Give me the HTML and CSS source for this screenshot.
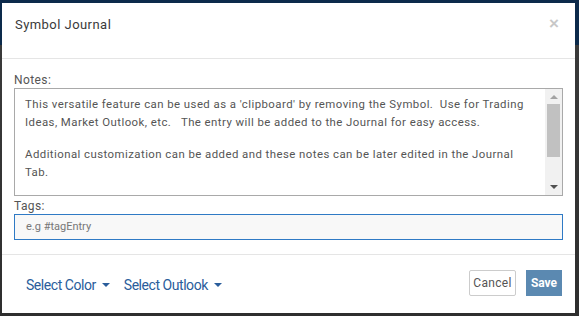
FILE: index.html
```html
<!DOCTYPE html>
<html>
<head>
<meta charset="utf-8">
<link rel="stylesheet" href="styles.css">
</head>
<body>
<div class="backdrop">
  <div class="modal">
    <div class="modal-header">
      <h4 class="title">Symbol Journal</h4>
      <span class="close">×</span>
    </div>
    <div class="modal-body">
      <label class="label">Notes:</label>
      <div class="notes">
        <div class="notes-text">
          <p>This versatile feature can be used as a 'clipboard' by removing the Symbol.&nbsp; Use for Trading Ideas, Market Outlook, etc. &nbsp; The entry will be added to the Journal for easy access.</p>
          <p>Additional customization can be added and these notes can be later edited in the Journal Tab.</p>
        </div>
        <div class="scrollbar">
          <div class="arrow up"></div>
          <div class="thumb"></div>
          <div class="spacer"></div>
          <div class="arrow down"></div>
        </div>
      </div>
      <label class="label tags-label">Tags:</label>
      <div class="tags">e.g #tagEntry</div>
    </div>
    <div class="modal-footer">
      <div class="selects">
        <span class="select">Select Color <span class="caret"></span></span>
        <span class="select">Select Outlook <span class="caret"></span></span>
      </div>
      <div class="buttons">
        <button class="btn cancel">Cancel</button>
        <button class="btn save">Save</button>
      </div>
    </div>
  </div>
</div>
</body>
</html>
```
FILE: styles.css
```css
* { box-sizing: border-box; }
html, body { margin: 0; padding: 0; }
body {
  width: 579px;
  height: 316px;
  overflow: hidden;
  font-family: Roboto, "Noto Sans", sans-serif;
  background: linear-gradient(to bottom, #0c2a4b 0, #0c2a4b 45px, #3a3a3a 45px, #2e2e2e 100%);
}
.backdrop {
  padding: 3px 4px 0 2px;
}
.modal {
  background: #fff;
  width: 573px;
  height: 310px;
  display: flex;
  flex-direction: column;
}
.modal-header {
  height: 56px;
  border-bottom: 1px solid #e5e5e5;
  display: flex;
  align-items: flex-start;
  justify-content: space-between;
  padding: 14px 16px 0 13px;
}
.title {
  margin: 0;
  font-weight: 400;
  font-size: 13px;
  color: #3a3a3a;
  letter-spacing: 0.45px;
  line-height: 16px;
}
.close {
  font-size: 17px;
  color: #c8c8c8;
  font-family: "Liberation Sans", Arial, sans-serif;
  font-weight: bold;
  line-height: 16px;
  margin-top: -1px;
}
.modal-body {
  padding: 14px 12px 0 12px;
  display: flex;
  flex-direction: column;
  height: 196px;
  border-bottom: 1px solid #e5e5e5;
}
.label {
  font-size: 12px;
  color: #555;
  letter-spacing: 0.4px;
  line-height: 14px;
  margin-bottom: 1px;
}
.notes {
  height: 108px;
  border: 1px solid #a9a9a9;
  display: flex;
}
.notes-text {
  flex: 1;
  padding: 6px 10px 0 10px;
  font-size: 11.4px;
  color: #555;
  letter-spacing: 0.45px;
  line-height: 18px;
}
.notes-text p { margin: 0 0 14px 0; }
.scrollbar {
  width: 17px;
  background: #f1f1f1;
  display: flex;
  flex-direction: column;
  align-items: center;
}
.arrow {
  width: 0; height: 0;
  border-left: 4px solid transparent;
  border-right: 4px solid transparent;
}
.arrow.up { border-bottom: 4px solid #a3a3a3; margin: 6px 0 5px; }
.arrow.down { border-top: 4px solid #505050; margin: 0 0 6px; }
.thumb {
  width: 13px;
  height: 53px;
  background: #c1c1c1;
}
.spacer { flex: 1; }
.tags-label { margin-top: 3px; }
.tags {
  height: 26px;
  border: 1px solid #2f7ac5;
  background: #f8f8f8;
  font-size: 11px;
  color: #777;
  padding: 5px 11px;
  line-height: 14px;
}
.modal-footer {
  flex: 1;
  display: flex;
  align-items: center;
  justify-content: space-between;
  padding: 0 13px 2px 24px;
}
.selects { display: flex; gap: 14px; padding-top: 3px; }
.select {
  font-size: 14px;
  letter-spacing: -0.45px;
  color: #2a5d9b;
  display: flex;
  align-items: center;
  gap: 5px;
}
.caret {
  display: inline-block;
  width: 0; height: 0;
  border-left: 4.5px solid transparent;
  border-right: 4.5px solid transparent;
  border-top: 4.5px solid #2a5d9b;
  margin-left: 1px;
}
.buttons { display: flex; gap: 10px; }
.btn {
  font-family: Roboto, sans-serif;
  font-size: 12px;
  height: 26px;
  padding: 0;
  border-radius: 2px;
  cursor: pointer;
}
.cancel {
  background: #fff;
  border: 1px solid #ccc;
  color: #555;
  letter-spacing: 0.3px;
  width: 47px;
}
.save {
  background: #5b89b1;
  border: 1px solid #5b89b1;
  color: #fff;
  font-weight: bold;
  width: 36px;
  border-radius: 0;
}
```
